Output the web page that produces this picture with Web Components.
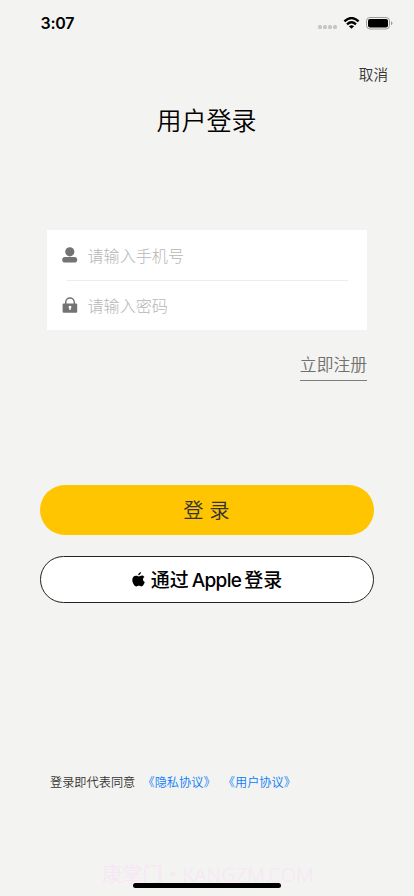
<!DOCTYPE html>
<html lang="zh-CN">
<head>
<meta charset="utf-8">
<title>用户登录</title>
<style>
html,body{margin:0;height:100%;background:#f3f3f1;overflow:hidden}
body{font-family:Inter,"Noto Sans CJK SC",sans-serif;font-weight:350}
</style>
</head>
<body>
<login-page></login-page>
<script>
const define = (name, css, html) => customElements.define(name, class extends HTMLElement {
  constructor() {
    super();
    this.attachShadow({mode: 'open'}).innerHTML = `<style>*{box-sizing:border-box}${css}</style>${html}`;
  }
});

define('status-bar', `
:host{display:flex;height:46px;box-sizing:border-box;padding:0 21px 0 40.5px;align-items:center;justify-content:space-between}
.time{font:600 16px/20px Inter,sans-serif;letter-spacing:-.25px;color:#000}
.right{display:flex;align-items:center}
svg{display:block}
.dots{margin:8px 6px 0 0}.wifi{margin-right:6px}`, `
<span class="time"><slot></slot></span>
<span class="right">
<svg class="dots" width="19" height="4" fill="#c6c6c4"><rect width="4" height="4" rx="1.5"/><rect x="5" width="4" height="4" rx="1.5"/><rect x="10" width="4" height="4" rx="1.5"/><rect x="15" width="4" height="4" rx="1.5"/></svg>
<svg class="wifi" width="17" height="12" viewBox="0 0 16 12" fill="none" stroke="#000" stroke-width="2.4"><path d="M.9 4.3Q8-2.1 15.1 4.3"/><path d="M3.5 7.3Q8 3.3 12.5 7.3"/><path d="M8 11.8 5.4 9.3Q8 7.4 10.6 9.3Z" fill="#000" stroke="none"/></svg>
<svg width="27" height="13" viewBox="0 0 27 13"><rect x=".5" y=".5" width="23" height="11.5" rx="3.4" fill="none" stroke="#9b9b9a"/><rect x="2" y="2" width="20" height="8.5" rx="2" fill="#000"/><path d="M25 4.3q1.4.6 1.4 2t-1.4 2z" fill="#9b9b9a"/></svg>
</span>`);

define('nav-action', `
:host{display:flex;justify-content:flex-end;height:56px;box-sizing:border-box;padding:0 26px 2px 0;align-items:center;font-size:14.6px;color:#333}`,
`<slot></slot>`);

define('page-title', `
:host{display:flex;box-sizing:border-box;justify-content:center;align-items:center;height:38px;padding:0 1px 4px 0;font-size:25px;color:#000}`,
`<slot></slot>`);

define('field-card', `
:host{display:block;width:320px;height:100px;margin:90px 0 0 47px;background:#fff}`,
`<slot></slot>`);

define('field-row', `
:host{display:flex;align-items:center;height:50px;padding-left:15px;font-size:16.1px;font-weight:300;color:#b6b6b6}
span{padding-bottom:1px}
::slotted(svg){display:block;width:16px;height:16px;margin-right:9.5px}`,
`<slot name="icon"></slot><span><slot></slot></span>`);

define('row-divider', `:host{display:block;height:1px;margin:0 19px -1px 20px;background:#ececf0}`, ``);

define('register-link', `
:host{display:flex;justify-content:flex-end;margin:23px 47px 0 0;font-size:16.8px;color:#70706e}
span{display:block;height:28px;line-height:24px;border-bottom:1px solid #7d7d7b}`,
`<span><slot></slot></span>`);

define('pill-button', `
:host{display:flex;box-sizing:border-box;align-items:center;justify-content:center;width:334px;height:50px;padding:0 1px 2px 0;margin:104px 0 0 40px;border-radius:25px;background:#ffc500;color:#333;font-size:20.3px}`,
`<span><slot></slot></span>`);

define('apple-button', `
:host{display:flex;box-sizing:border-box;align-items:center;justify-content:center;width:334px;height:47px;margin:21px 0 0 40px;border:1px solid #222;border-radius:23.5px;background:#fff;color:#000;font-size:19px;font-weight:500}
svg{display:block;margin-right:6px}
span{display:flex;align-items:baseline;gap:3px;padding-bottom:2px;white-space:nowrap}
::slotted(b){font-weight:500}
::slotted(.latin){letter-spacing:-.65px}`,
`<svg width="13" height="15" viewBox="0 0 13 15"><path d="M8.9 0C9 1.7 7.7 3.3 6.2 3.3 6 1.8 7.4.3 8.9 0ZM12.4 5.1C10.4 6.3 10.6 9.2 12.8 10.1 12.1 12.1 10.9 14.4 9.5 14.4 8.5 14.4 8.1 13.8 6.9 13.8S5.3 14.4 4.3 14.4C2.5 14.4.3 11 .3 8 .3 5.2 2 3.7 4 3.7 5.2 3.7 6 4.4 6.9 4.4 7.7 4.4 8.6 3.6 10 3.6 11 3.6 11.9 4.2 12.4 5.1Z"/></svg><span><slot></slot></span>`);

define('agreement-line', `
:host{display:flex;align-items:center;height:20px;margin:169px 0 0 50px;font-size:12.2px;color:#333;white-space:nowrap}
::slotted(a){color:#0a7cf8;margin-left:7.2px}`,
`<slot></slot>`);

define('page-footer', `
:host{display:grid;justify-items:center;margin-top:69px;height:35px}
.mark,.bar{grid-area:1/1}
.mark{font:350 20px/26px "Noto Sans","Noto Sans CJK SC",sans-serif;letter-spacing:.05px;padding:1px 0 0 2px;color:#f8e6f5;white-space:nowrap}
.bar{width:148px;height:5px;border-radius:3px;background:#000;margin-top:21.5px;z-index:1}`,
`<span class="mark"><slot></slot></span><i class="bar"></i>`);

define('login-page', `
:host{display:flex;flex-direction:column;width:414px;height:896px;background:#f3f3f1;overflow:hidden}`, `
<status-bar>3:07</status-bar>
<nav-action>取消</nav-action>
<page-title>用户登录</page-title>
<field-card>
<field-row><svg slot="icon" viewBox="0 0 16 16" fill="#737373"><circle cx="7.8" cy="4.8" r="4.6"/><rect x=".2" y="10" width="15" height="5.6" rx="2.8"/></svg>请输入手机号</field-row>
<row-divider></row-divider>
<field-row><svg slot="icon" viewBox="0 0 16 16"><path d="M3.7 8V5.2a4.3 4.3 0 0 1 8.6 0V8" fill="none" stroke="#737373" stroke-width="1.5"/><rect x=".6" y="6.5" width="14.6" height="9.2" rx="1" fill="#737373"/><path d="M8 8.7a1.5 1.5 0 0 1 .7 2.8V13H7.3V11.5A1.5 1.5 0 0 1 8 8.7Z" fill="#fff"/></svg>请输入密码</field-row>
</field-card>
<register-link>立即注册</register-link>
<pill-button>登 录</pill-button>
<apple-button><b>通过</b><b class="latin">Apple</b><b>登录</b></apple-button>
<agreement-line>登录即代表同意<a>《隐私协议》</a><a>《用户协议》</a></agreement-line>
<page-footer>康掌门・KANGZM.COM</page-footer>`);
</script>
</body>
</html>
